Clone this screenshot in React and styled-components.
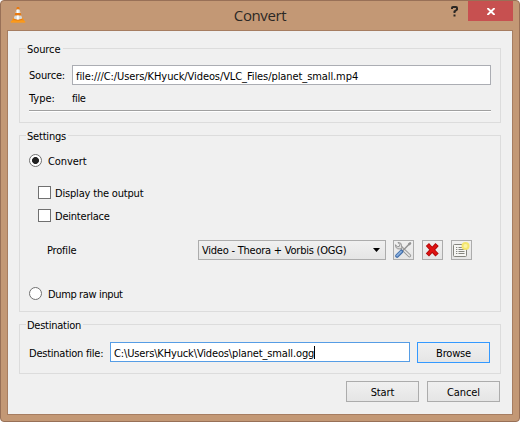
import React from "react";
import styled, { createGlobalStyle } from "styled-components";

const Global = createGlobalStyle`
  * { box-sizing: border-box; }
  body { margin: 0; background: #fff; overflow: hidden; }
  input, button { font: inherit; color: inherit; border-radius: 0; margin: 0; }
`;

const Window = styled.div`
  width: 520px;
  height: 422px;
  padding: 0 6px 6px;
  background: #c39875;
  border: 1px solid #987057;
  border-radius: 4px;
  font: 11px/14px "DejaVu Sans Condensed", "DejaVu Sans", sans-serif;
  font-stretch: condensed;
  color: #000;
`;

const TitleBar = styled.header`
  height: 29px;
  display: grid;
  grid-template-columns: 71px 1fr 71px;
  align-items: start;
`;

const Logo = styled.svg`
  width: 16px;
  height: 16px;
  margin: 6px 0 0 3px;
`;

const Title = styled.h1`
  margin: 3px 0 0;
  text-align: center;
  font: 400 15px/22px "Open Sans", "Noto Sans", sans-serif;
  font-stretch: normal;
  letter-spacing: -0.4px;
  color: #2c2825;
`;

const WindowControls = styled.div`
  display: flex;
  justify-content: flex-end;
`;

const ControlButton = styled.button`
  width: ${(p) => (p.$close ? 45 : 26)}px;
  height: 20px;
  padding: 1px 0 0;
  border: 0;
  display: flex;
  align-items: center;
  justify-content: center;
  background: ${(p) => (p.$close ? "#c75050" : "transparent")};
`;

const Content = styled.main`
  height: 385px;
  padding: 11px 11px 0 11px;
  display: flex;
  flex-direction: column;
  background: #f0f0f0;
  border: 1px solid #a67d61;
`;

const Group = styled.section`
  height: ${(p) => p.$height}px;
  margin-top: ${(p) => p.$gap || 0}px;
  padding: 0 9px;
  border: 1px solid #dcdcdc;
  display: flex;
  flex-direction: column;
  align-items: stretch;
`;

const Legend = styled.h2`
  align-self: flex-start;
  height: 15px;
  margin: -8px 0 0 -3px;
  padding: 0 2px 0 1px;
  background: #f0f0f0;
  font: inherit;
`;

const Text = styled.span`
  display: block;
  padding-top: 2px;
  white-space: pre;
  letter-spacing: ${(p) => p.$track || 0}px;
`;

const Row = styled.div`
  display: flex;
  align-items: center;
  height: ${(p) => p.$height}px;
  margin-top: ${(p) => p.$gap || 0}px;
  padding-left: ${(p) => p.$indent || 0}px;
`;

const Label = styled(Text)`
  width: ${(p) => p.$width}px;
  flex: none;
`;

const Field = styled.div`
  flex: ${(p) => (p.$width ? "none" : 1)};
  width: ${(p) => (p.$width ? p.$width + "px" : "auto")};
  height: 20px;
  align-self: flex-start;
  padding: 2px 0 0 3px;
  display: flex;
  align-items: center;
  background: #fff;
  border: 1px solid ${(p) => (p.$focused ? "#569de5" : "#abadb3")};
`;

const Caret = styled.i`
  width: 1px;
  height: 13px;
  margin-bottom: 1px;
  background: #000;
`;

const Separator = styled.hr`
  width: 462px;
  height: 2px;
  margin: 5px 0 0;
  border: 0;
  border-top: 1px solid #a0a0a0;
  background: #fff;
`;

const Radio = styled.span`
  width: 13px;
  height: 13px;
  margin-right: 6px;
  border: 1px solid #707070;
  border-radius: 50%;
  background: ${(p) => (p.$on ? "radial-gradient(circle, #212121 3.1px, #fff 3.8px)" : "#fff")};
`;

const Checkbox = styled.span`
  width: 13px;
  height: 13px;
  margin-right: 4px;
  border: 1px solid #707070;
  background: #fff;
`;

const Select = styled.div`
  width: 188px;
  height: 20px;
  padding: 0 5px 0 3px;
  display: flex;
  align-items: center;
  justify-content: space-between;
  background: linear-gradient(#f0f0f0, #e5e5e5);
  border: 1px solid #acacac;
`;

const Tools = styled.div`
  display: flex;
  gap: 8px;
  margin-left: 7px;
`;

const ToolButton = styled.button`
  width: 21px;
  height: 20px;
  padding: 0;
  border: 1px solid #acacac;
  background: linear-gradient(#f0f0f0, #e5e5e5);
  svg { display: block; width: 19px; height: 18px; }
`;

const PushButton = styled.button`
  width: 73px;
  height: 21px;
  padding: 0;
  display: flex;
  align-items: center;
  justify-content: center;
  background: linear-gradient(#f0f0f0, #e5e5e5);
  border: 1px solid ${(p) => (p.$default ? "#3399ff" : "#acacac")};
  margin-left: ${(p) => p.$gap || 0}px;
`;

const Actions = styled.footer`
  display: flex;
  justify-content: flex-end;
  margin: 7px 1px 0 0;
`;

const ConeIcon = () => (
  <Logo viewBox="0 0 16 16">
    <path d="M3.2 10.8h9.6l2 4H1.2z" fill="#f59419" />
    <path d="M.8 14h14.4v1.7H.8z" fill="#fb9a1c" />
    <path d="M6.9 0h2.2l3.4 12.4q-4.5 2-9 0z" fill="#e8790f" />
    <path d="M6.3 2.6h3.4l1 3.3H5.3zM4.6 8.6h6.8l.9 3q-4.3 1.8-8.6 0z" fill="#d5d8d8" />
    <path d="M7.2 2.6h1.4v3.3H7zM6.8 8.6h2v4h-2z" fill="#fff" />
  </Logo>
);

const ToolsIcon = () => (
  <svg viewBox="0 0 19 18" fill="none" strokeLinecap="round">
    <path d="M7 6.5L15.4 14.6" stroke="#929292" strokeWidth="3.4" />
    <path d="M6.5 6L15.4 14.6" stroke="#e4e4e4" strokeWidth="1.7" />
    <path d="M1.5 4.1Q1.3 8 5.2 7.9L8 7.7 7.6 4.8Q7.8 1.3 4 1.5L5.9 3.6 5.4 5.3 3.6 5.8z" fill="#e1e1e1" stroke="#8b8b8b" strokeWidth=".9" strokeLinejoin="round" />
    <path d="M9 9.5L15.5 2.8" stroke="#929292" strokeWidth="1.4" />
    <path d="M15.2 3.2l.9-.9" stroke="#929292" strokeWidth="2.4" />
    <path d="M3.1 14.9L7.4 10.6" stroke="#4470ac" strokeWidth="3.8" />
    <path d="M3.1 14.6L7.1 10.6" stroke="#8bb0dd" strokeWidth="1.7" />
  </svg>
);

const DeleteIcon = () => (
  <svg viewBox="0 0 19 18" fill="none" strokeLinecap="square">
    <path d="M5.9 5.2L12.6 12.4M12.6 5.2L5.9 12.4" stroke="#b00909" strokeWidth="4.4" strokeLinejoin="round" />
    <path d="M5.8 5L12.7 12.4M12.7 5L5.8 12.4" stroke="#df1212" strokeWidth="2.6" />
  </svg>
);

const NewProfileIcon = () => (
  <svg viewBox="0 0 19 18">
    <rect x="1.5" y="3.5" width="13" height="12" rx="1" fill="#f6f6f4" stroke="#85857f" />
    <path d="M4 6.5h1.3M6.5 6.5h4M4 8.5h1.3M6.5 8.5h6M4 10.5h1.3M6.5 10.5h6M4 12.5h1.3M6.5 12.5h6" stroke="#85857f" />
    <circle cx="13.5" cy="5" r="4" fill="#f4e66e" />
    <circle cx="13.5" cy="5" r="2" fill="#faf3a4" />
  </svg>
);

export default function App() {
  return (
    <>
      <Global />
      <Window>
        <TitleBar>
          <ConeIcon />
          <Title>Convert</Title>
          <WindowControls>
            <ControlButton aria-label="Help">
              <svg width="8" height="11" viewBox="0 0 8 11" fill="none" stroke="#2b2724" strokeWidth="2">
                <path d="M1 3V2q0-1 1-1h3q1 0 1 1v1.5L3.5 5.5V7M3.5 8.5v2" />
              </svg>
            </ControlButton>
            <ControlButton $close aria-label="Close">
              <svg width="8" height="7" viewBox="0 0 8 7" stroke="#fff" strokeWidth="1.9">
                <path d="M.4 0L7.6 7M7.6 0L.4 7" />
              </svg>
            </ControlButton>
          </WindowControls>
        </TitleBar>
        <Content>
          <Group $height={75} $gap={6}>
            <Legend><Text $track={-0.08}>Source</Text></Legend>
            <Row $height={20} $gap={9}>
              <Label $width={43} $track={-0.2}>Source:</Label>
              <Field><Text $track={-0.085}>file:///C:/Users/KHyuck/Videos/VLC_Files/planet_small.mp4</Text></Field>
            </Row>
            <Row $height={14} $gap={6}>
              <Label $width={43}>Type:</Label>
              <Text $track={-0.4}>file</Text>
            </Row>
            <Separator />
          </Group>
          <Group $height={177} $gap={12}>
            <Legend><Text $track={-0.2}>Settings</Text></Legend>
            <Row $height={13} $gap={11}><Radio $on /><Text $track={-0.08}>Convert</Text></Row>
            <Row $height={13} $gap={19} $indent={9}><Checkbox /><Text $track={-0.18}>Display the output</Text></Row>
            <Row $height={13} $gap={10} $indent={9}><Checkbox /><Text $track={-0.22}>Deinterlace</Text></Row>
            <Row $height={20} $gap={18} $indent={18}>
              <Label $width={151} $track={-0.2}>Profile</Label>
              <Select>
                <Text $track={-0.23}>Video - Theora + Vorbis (OGG)</Text>
                <svg width="7" height="4" viewBox="0 0 7 4"><path d="M0 0h7L3.5 4z" /></svg>
              </Select>
              <Tools>
                <ToolButton aria-label="Edit profile"><ToolsIcon /></ToolButton>
                <ToolButton aria-label="Delete profile"><DeleteIcon /></ToolButton>
                <ToolButton aria-label="New profile"><NewProfileIcon /></ToolButton>
              </Tools>
            </Row>
            <Row $height={13} $gap={27}><Radio /><Text $track={-0.37}>Dump raw input</Text></Row>
          </Group>
          <Group $height={50} $gap={12}>
            <Legend><Text $track={-0.25}>Destination</Text></Legend>
            <Row $height={21} $gap={10}>
              <Label $width={81} $track={-0.24}>Destination file:</Label>
              <Field $width={300} $focused>
                <Text $track={-0.145}>C:\Users\KHyuck\Videos\planet_small.ogg</Text>
                <Caret />
              </Field>
              <PushButton $default $gap={7}><Text $track={-0.2}>Browse</Text></PushButton>
            </Row>
          </Group>
          <Actions>
            <PushButton><Text $track={-0.1}>Start</Text></PushButton>
            <PushButton $gap={8}><Text $track={-0.1}>Cancel</Text></PushButton>
          </Actions>
        </Content>
      </Window>
    </>
  );
}
